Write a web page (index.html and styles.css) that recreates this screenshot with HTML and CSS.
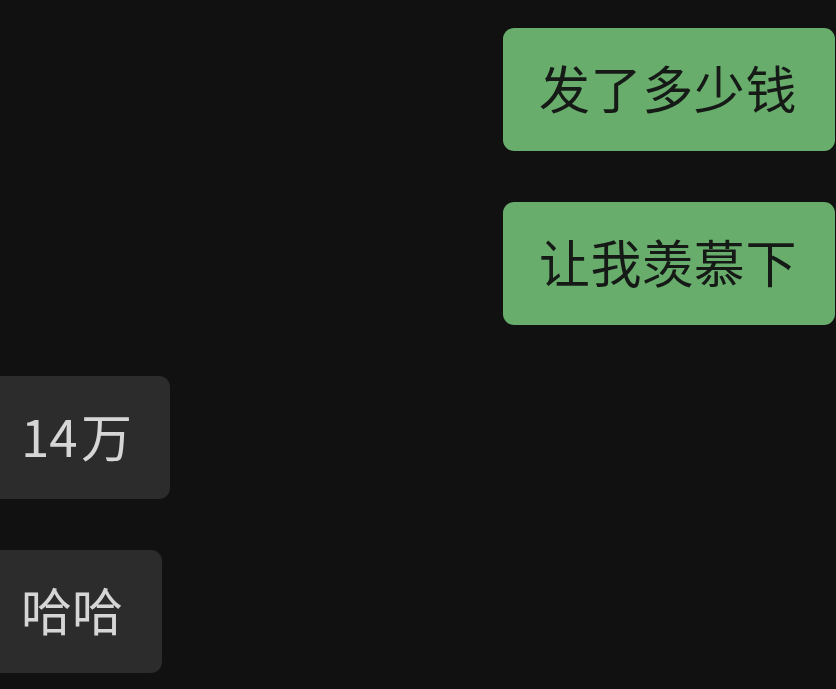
FILE: index.html
```html
<!DOCTYPE html>
<html lang="zh-CN">
<head>
<meta charset="utf-8">
<link rel="stylesheet" href="styles.css">
</head>
<body>
<div class="chat">
  <div class="row mine"><div class="bubble green">发了多少钱</div></div>
  <div class="row mine"><div class="bubble green">让我羡慕下</div></div>
  <div class="row theirs"><div class="bubble grey">14 万</div></div>
  <div class="row theirs"><div class="bubble grey short">哈哈</div></div>
</div>
</body>
</html>
```

FILE: styles.css
```css
html, body {
  margin: 0;
  padding: 0;
  background: #111112;
  width: 836px;
  height: 689px;
  overflow: hidden;
}
.chat {
  display: flex;
  flex-direction: column;
  gap: 51px;
  padding-top: 28px;
}
.row {
  display: flex;
}
.row.mine {
  justify-content: flex-end;
}
.bubble {
  height: 123px;
  box-sizing: border-box;
  display: flex;
  align-items: center;
  padding-bottom: 5px;
  border-radius: 11px;
  font-family: "Noto Sans CJK SC", "Noto Sans", sans-serif;
  font-size: 51px;
  line-height: 1;
}
.green {
  background: #69ad6d;
  color: #161a16;
  width: 332px;
  margin-right: 1px;
  padding-left: 36px;
  letter-spacing: 0.6px;
}
.grey {
  background: #2c2c2d;
  color: #d6d6d6;
  width: 182px;
  margin-left: -12px;
  padding-left: 33px;
  word-spacing: -8px;
}
.grey.short {
  width: 174px;
}
```
